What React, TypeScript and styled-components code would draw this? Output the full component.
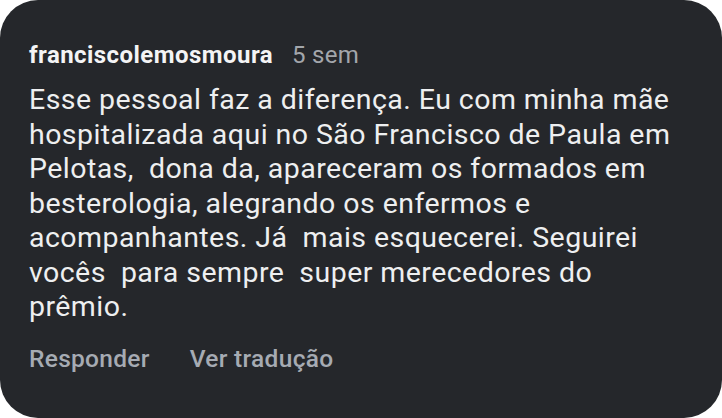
import React from 'react';
import styled, { createGlobalStyle } from 'styled-components';

const GlobalStyle = createGlobalStyle`
  html, body {
    margin: 0;
    padding: 0;
    background: #ffffff;
  }
  body {
    font-family: Roboto, "Noto Sans", Arial, sans-serif;
  }
`;

const Card = styled.div`
  box-sizing: border-box;
  width: 722px;
  height: 418px;
  background: #25272b;
  border-radius: 38px;
  padding: 40px 20px 0 29px;
  display: flex;
  flex-direction: column;
`;

const Header = styled.div`
  display: flex;
  align-items: baseline;
  gap: 19px;
  line-height: 30px;
`;

const Username = styled.span`
  color: #f4f4f5;
  font-size: 24px;
  font-weight: 700;
  letter-spacing: 0.45px;
`;

const Time = styled.span`
  color: #a3a6ab;
  font-size: 24px;
  font-weight: 400;
  letter-spacing: 0.3px;
`;

const Body = styled.p`
  margin: 13px 0 0;
  color: #eeeff0;
  font-size: 28.5px;
  line-height: 34.5px;
  letter-spacing: 0.45px;
  white-space: pre-wrap;
`;

const Actions = styled.div`
  display: flex;
  gap: 40px;
  margin-top: 19px;
  line-height: 30px;
`;

const Action = styled.button`
  background: none;
  border: 0;
  padding: 0;
  font-family: inherit;
  line-height: inherit;
  color: #a6abb3;
  font-size: 24.5px;
  font-weight: 500;
  letter-spacing: 0.3px;
  cursor: pointer;
`;

const lines = [
  'Esse pessoal faz a diferença. Eu com minha mãe',
  'hospitalizada aqui no São Francisco de Paula em',
  'Pelotas,  dona da, apareceram os formados em',
  'besterologia, alegrando os enfermos e',
  'acompanhantes. Já  mais esquecerei. Seguirei',
  'vocês  para sempre  super merecedores do',
  'prêmio.',
];

export default function App() {
  return (
    <>
      <GlobalStyle />
      <Card>
        <Header>
          <Username>franciscolemosmoura</Username>
          <Time>5 sem</Time>
        </Header>
        <Body>{lines.join('\n')}</Body>
        <Actions>
          <Action>Responder</Action>
          <Action>Ver tradução</Action>
        </Actions>
      </Card>
    </>
  );
}
